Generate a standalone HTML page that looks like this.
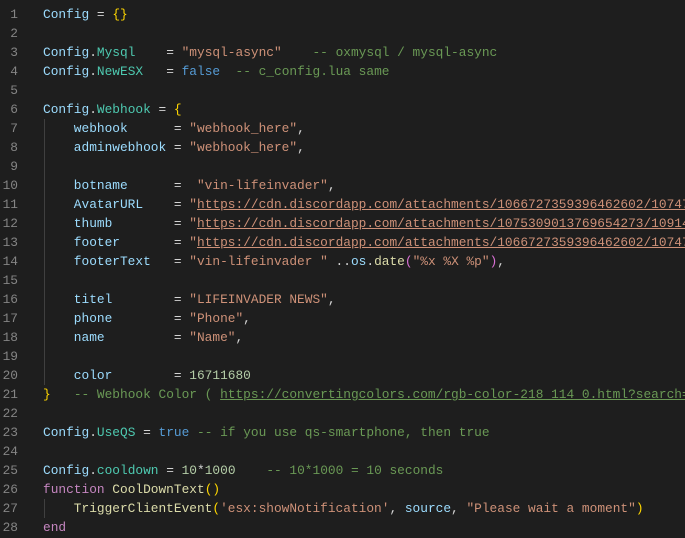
<!DOCTYPE html>
<html><head><meta charset="utf-8"><style>
html,body{margin:0;padding:0;background:#1e1e1e;width:685px;height:538px;overflow:hidden}
.ed{position:absolute;left:0;top:5px;font-family:"Liberation Mono",monospace;font-size:12.83px;line-height:19px;color:#d4d4d4}
.l{height:19px;position:relative;white-space:pre}
.n{position:absolute;left:0;width:18px;text-align:right;color:#858585}
.c{position:absolute;left:43px}
.g{position:absolute;left:44px;width:1px;background:#404040}
.v{color:#9cdcfe}.p{color:#4ec9b0}.s{color:#ce9178}.m{color:#6a9955}.k{color:#569cd6}.y{color:#ffd700}.f{color:#dcdcaa}.num{color:#b5cea8}.pk{color:#da70d6}.kw{color:#c586c0}
.u{text-decoration:underline}
</style></head><body>
<div class="g" style="top:119px;height:266px"></div>
<div class="g" style="top:499px;height:19px"></div>
<div class="ed">
<div class="l"><span class="n">1</span><span class="c"><span class="v">Config</span> = <span class="y">{}</span></span></div>
<div class="l"><span class="n">2</span></div>
<div class="l"><span class="n">3</span><span class="c"><span class="v">Config</span>.<span class="p">Mysql</span>    = <span class="s">"mysql-async"</span>    <span class="m">-- oxmysql / mysql-async</span></span></div>
<div class="l"><span class="n">4</span><span class="c"><span class="v">Config</span>.<span class="p">NewESX</span>   = <span class="k">false</span>  <span class="m">-- c_config.lua same</span></span></div>
<div class="l"><span class="n">5</span></div>
<div class="l"><span class="n">6</span><span class="c"><span class="v">Config</span>.<span class="p">Webhook</span> = <span class="y">{</span></span></div>
<div class="l"><span class="n">7</span><span class="c">    <span class="v">webhook</span>      = <span class="s">"webhook_here"</span>,</span></div>
<div class="l"><span class="n">8</span><span class="c">    <span class="v">adminwebhook</span> = <span class="s">"webhook_here"</span>,</span></div>
<div class="l"><span class="n">9</span></div>
<div class="l"><span class="n">10</span><span class="c">    <span class="v">botname</span>      =  <span class="s">"vin-lifeinvader"</span>,</span></div>
<div class="l"><span class="n">11</span><span class="c">    <span class="v">AvatarURL</span>    = <span class="s">"<span class="u">https://cdn.discordapp.com/attachments/1066727359396462602/1074783</span></span></span></div>
<div class="l"><span class="n">12</span><span class="c">    <span class="v">thumb</span>        = <span class="s">"<span class="u">https://cdn.discordapp.com/attachments/1075309013769654273/1091468</span></span></span></div>
<div class="l"><span class="n">13</span><span class="c">    <span class="v">footer</span>       = <span class="s">"<span class="u">https://cdn.discordapp.com/attachments/1066727359396462602/1074783</span></span></span></div>
<div class="l"><span class="n">14</span><span class="c">    <span class="v">footerText</span>   = <span class="s">"vin-lifeinvader "</span> ..<span class="v">os</span>.<span class="f">date</span><span class="pk">(</span><span class="s">"%x %X %p"</span><span class="pk">)</span>,</span></div>
<div class="l"><span class="n">15</span></div>
<div class="l"><span class="n">16</span><span class="c">    <span class="v">titel</span>        = <span class="s">"LIFEINVADER NEWS"</span>,</span></div>
<div class="l"><span class="n">17</span><span class="c">    <span class="v">phone</span>        = <span class="s">"Phone"</span>,</span></div>
<div class="l"><span class="n">18</span><span class="c">    <span class="v">name</span>         = <span class="s">"Name"</span>,</span></div>
<div class="l"><span class="n">19</span></div>
<div class="l"><span class="n">20</span><span class="c">    <span class="v">color</span>        = <span class="num">16711680</span></span></div>
<div class="l"><span class="n">21</span><span class="c"><span class="y">}</span>   <span class="m">-- Webhook Color ( <span class="u">https://convertingcolors.com/rgb-color-218_114_0.html?search=</span></span></span></div>
<div class="l"><span class="n">22</span></div>
<div class="l"><span class="n">23</span><span class="c"><span class="v">Config</span>.<span class="p">UseQS</span> = <span class="k">true</span> <span class="m">-- if you use qs-smartphone, then true</span></span></div>
<div class="l"><span class="n">24</span></div>
<div class="l"><span class="n">25</span><span class="c"><span class="v">Config</span>.<span class="p">cooldown</span> = <span class="num">10</span>*<span class="num">1000</span>    <span class="m">-- 10*1000 = 10 seconds</span></span></div>
<div class="l"><span class="n">26</span><span class="c"><span class="kw">function</span> <span class="f">CoolDownText</span><span class="y">()</span></span></div>
<div class="l"><span class="n">27</span><span class="c">    <span class="f">TriggerClientEvent</span><span class="y">(</span><span class="s">'esx:showNotification'</span>, <span class="v">source</span>, <span class="s">"Please wait a moment"</span><span class="y">)</span></span></div>
<div class="l"><span class="n">28</span><span class="c"><span class="kw">end</span></span></div>
</div>
</body></html>
